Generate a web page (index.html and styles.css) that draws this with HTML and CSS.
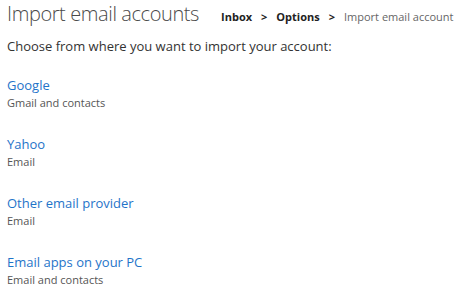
FILE: index.html
```html
<!DOCTYPE html>
<html lang="en">
<head>
  <meta charset="UTF-8" />
  <title>Import email accounts</title>
  <link rel="stylesheet" href="styles.css">
</head>
<body>
  <div class="header">
    <h1>Import email accounts</h1>
    <div class="crumbs">
      <a href="#">Inbox</a>
      <span class="sep">&gt;</span>
      <a href="#">Options</a>
      <span class="sep">&gt;</span>
      <span class="current">Import email account</span>
    </div>
  </div>

  <p class="intro">Choose from where you want to import your account:</p>

  <ul class="providers">
    <li>
      <a href="#">Google</a>
      <span class="desc">Gmail and contacts</span>
    </li>
    <li>
      <a href="#">Yahoo</a>
      <span class="desc">Email</span>
    </li>
    <li>
      <a href="#">Other email provider</a>
      <span class="desc">Email</span>
    </li>
    <li>
      <a href="#">Email apps on your PC</a>
      <span class="desc">Email and contacts</span>
    </li>
  </ul>
</body>
</html>
```

FILE: styles.css
```css
* {
  box-sizing: border-box;
}

body {
  margin: 0;
  padding: 0 7px;
  background: #fff;
  color: #333;
  font-family: "Open Sans", sans-serif;
  overflow: hidden;
  width: 456px;
}

.header {
  display: flex;
  align-items: baseline;
  white-space: nowrap;
  height: 28px;
}

h1 {
  margin: 0;
  font-size: 20px;
  font-weight: 300;
  letter-spacing: -0.4px;
  color: #4a4a4a;
  line-height: 28px;
}

.crumbs {
  display: flex;
  align-items: baseline;
  gap: 9px;
  margin-left: 22px;
  font-size: 11px;
  color: #666;
}

.crumbs a {
  color: #222;
  font-weight: 700;
  text-decoration: none;
}

.crumbs .sep {
  color: #222;
  font-weight: 700;
}

.intro {
  margin: 9px 0 0;
  font-size: 13px;
  line-height: 18px;
  color: #333;
}

.providers {
  list-style: none;
  margin: 21px 0 0;
  padding: 0;
}

.providers li {
  margin-bottom: 24px;
}

.providers a {
  display: block;
  color: #1f74c9;
  font-size: 13px;
  line-height: 18px;
  text-decoration: none;
}

.desc {
  display: block;
  margin-top: 1px;
  font-size: 11px;
  line-height: 16px;
  color: #555;
}
```
